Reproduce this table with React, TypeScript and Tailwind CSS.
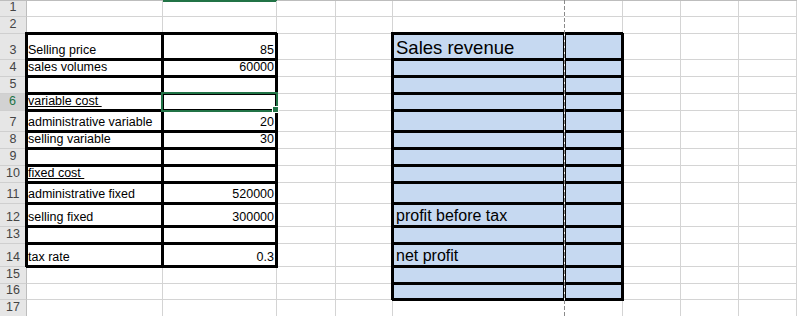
import React from "react";

const ROW_COUNT = 17;
const COL_COUNT = 9; // A..I

const INPUTS: Record<number, { label: string; value?: string; underline?: boolean }> = {
  3: { label: "Selling price", value: "85" },
  4: { label: "sales volumes", value: "60000" },
  6: { label: "variable cost ", underline: true },
  7: { label: "administrative variable", value: "20" },
  8: { label: "selling variable", value: "30" },
  10: { label: "fixed cost ", underline: true },
  11: { label: "administrative fixed", value: "520000" },
  12: { label: "selling fixed", value: "300000" },
  14: { label: "tax rate", value: "0.3" },
};

const RESULTS: Record<number, { label: string; big?: boolean }> = {
  3: { label: "Sales revenue", big: true },
  12: { label: "profit before tax" },
  14: { label: "net profit" },
};

// A3:B14 and E3:F16 carry thick outlines on every cell
const isThick = (r: number, c: number) =>
  (r >= 3 && r <= 14 && (c === 0 || c === 1)) || (r >= 3 && r <= 16 && (c === 4 || c === 5));

const gridCell = "flex items-end min-w-0 border-r border-b border-[#d4d4d4]";
const thickCell =
  "relative z-10 flex items-end min-w-0 border-t border-l border-r-2 border-b-2 border-black shadow-[0_0_0_1px_#000,-1px_-1px_0_1px_#000]";

function RowHeader({ n }: { n: number }) {
  const active = n === 6;
  return (
    <div
      className={`flex items-end justify-center text-[12.5px] leading-[18px] border-b border-b-[#cfcfcf] ${
        active
          ? "bg-[#d2d2d2] text-[#217346] border-r-2 border-r-[#217346]"
          : "bg-[#e6e6e6] text-[#444] border-r border-r-[#bdbdbd]"
      }`}
    >
      {n}
    </div>
  );
}

function Cell({ r, c }: { r: number; c: number }) {
  const thick = isThick(r, c);
  let cls = thick ? thickCell : gridCell;
  if (thick && c >= 4) cls += " bg-[#c6d9f1]";
  if (r === 1 && c === 1) cls += " shadow-[inset_0_1px_0_#217346]";

  const item = INPUTS[r];
  const res = RESULTS[r];

  return (
    <div className={cls}>
      {c === 0 && item && (
        <span className={`whitespace-pre text-[12.5px] leading-[15.5px] ${item.underline ? "underline" : ""}`}>
          {item.label}
        </span>
      )}
      {c === 1 && item?.value && (
        <span className="w-full pr-px text-right text-[12.5px] leading-[15.5px]">{item.value}</span>
      )}
      {c === 4 && res && (
        <span
          className={`pl-[2px] whitespace-nowrap ${res.big ? "text-[18.5px] leading-[20px]" : "text-[16px] leading-[18px]"}`}
        >
          {res.label}
        </span>
      )}
    </div>
  );
}

export default function App() {
  const rows = Array.from({ length: ROW_COUNT }, (_, i) => i + 1);
  const cols = Array.from({ length: COL_COUNT }, (_, i) => i);

  return (
    <div className="relative w-[797px] h-[316px] overflow-hidden bg-white font-['Liberation_Sans',Arial,sans-serif] text-black">
      {/* bottom edge of the column headings, column B is the active one */}
      <div className="flex h-px">
        <div className="w-[163px] bg-[#bdbdbd]" />
        <div className="w-[114px] bg-[#217346]" />
        <div className="flex-1 bg-[#bdbdbd]" />
      </div>

      <div className="grid grid-cols-[27px_136px_114px_59px_57px_172px_58px_58px_58px_58px] grid-rows-[16px_17px_26px_17px_17px_17px_21px_17px_17px_17px_21px_23px_17px_23px_17px_16px_17px]">
        {rows.map((r) => (
          <React.Fragment key={r}>
            <RowHeader n={r} />
            {cols.map((c) => (
              <Cell key={c} r={r} c={c} />
            ))}
          </React.Fragment>
        ))}
      </div>

      {/* page break line */}
      <div className="absolute z-20 left-[564px] top-0 h-full w-px bg-[repeating-linear-gradient(to_bottom,#8a8a8a_0_4px,#ffffff_4px_6px)]" />

      {/* active cell B6 */}
      <div className="absolute z-20 left-[161px] top-[92px] w-[117px] h-[20px] border-2 border-[#217346]" />
      <div className="absolute z-20 left-[272px] top-[106px] w-[7px] h-[7px] bg-[#217346] border border-white" />
    </div>
  );
}
